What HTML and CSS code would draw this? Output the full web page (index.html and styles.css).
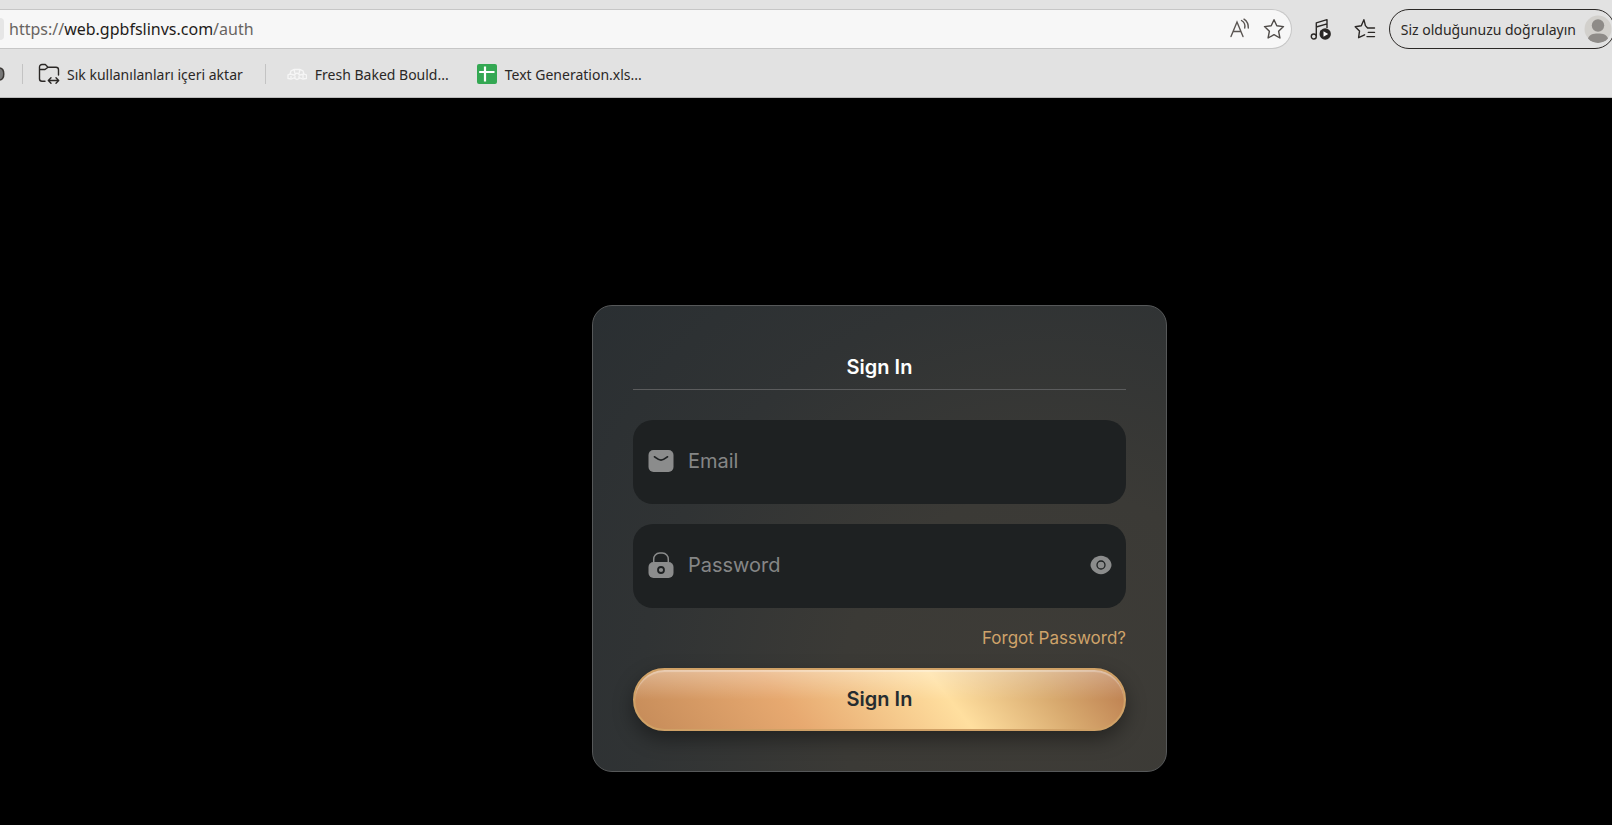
FILE: index.html
```html
<!DOCTYPE html>
<html lang="tr">
<head>
<meta charset="utf-8">
<meta name="viewport" content="width=device-width, initial-scale=1">
<title>Sign In</title>
<link rel="stylesheet" href="styles.css">
</head>
<body>
<header class="chrome">
  <div class="toolbar">
    <div class="address">
      <span class="site-info"></span>
      <span class="url">https://<b>web.gpbfslinvs.com</b>/auth</span>
      <button class="tool" aria-label="Read aloud">
        <svg width="22" height="22" viewBox="0 0 22 22" fill="none" stroke="#5a5552" stroke-width="1.4" stroke-linecap="round"><path d="M2 18.500 8 4l6 14.500M4.300 13.500h7.600M12.500 2.500a7 7 0 0 1 3.200 7.500M15 1.200a10 10 0 0 1 4.300 8.800"/></svg>
      </button>
      <button class="tool" aria-label="Add to favourites">
        <svg width="22" height="22" viewBox="0 0 22 22" fill="none" stroke="#4f4b48" stroke-width="1.4" stroke-linejoin="round"><path d="M11 1.700 13.800 7.800 20.500 8.600 15.600 13.200 16.900 20 11 16.700 5.100 20 6.400 13.200 1.500 8.600 8.200 7.800Z"/></svg>
      </button>
    </div>
    <button class="tool" aria-label="Media">
      <svg width="22" height="22" viewBox="0 0 22 22" fill="none" stroke="#2b2826" stroke-width="1.400" stroke-linejoin="round"><circle cx="3.800" cy="18.500" r="2.500"/><path d="M6.300 18.300V4.800L17 1.600V10M6.300 9 17 5.800M11 12.500v5"/><circle cx="15.200" cy="16" r="5.700" fill="#2b2826" stroke="none"/><path d="M13.500 13.200v5.600l4.700-2.800z" fill="#fff" stroke="none"/></svg>
    </button>
    <button class="tool" aria-label="Favourites">
      <svg width="22" height="22" viewBox="0 0 22 22" fill="none" stroke="#2b2826" stroke-width="1.400" stroke-linejoin="round" stroke-linecap="round"><path d="M20.500 10H13.600L11.400 7.600 9.900 1.700 7.300 7.700 1.200 8.700 5.500 13.100 4.600 19.700 10.600 16.800M14.300 14.400H20.500M13 18.600H20.500"/></svg>
    </button>
    <button class="profile"><span>Siz olduğunuzu doğrulayın</span>
      <svg width="28" height="28" viewBox="0 0 28 28"><circle cx="14" cy="14" r="13.500" fill="#d2d0cc"/><circle cx="14" cy="10.500" r="6.200" fill="#8e8b88"/><path d="M4 23.500C5 19.800 9 18.500 14 18.500s9 1.300 10 5A13.500 13.500 0 0 1 4 23.500Z" fill="#8e8b88"/></svg>
    </button>
  </div>
  <nav class="bookmarks" aria-label="Bookmarks">
    <svg class="edge-mark" width="5" height="16" viewBox="0 0 5 16"><path d="M0 2c5 1 5 11 0 12" fill="#777" stroke="#3a3734" stroke-width="1.500"/></svg>
    <span class="divider"></span>
    <a class="bookmark import" href="#import">
      <svg width="22" height="22" viewBox="0 0 22 22" fill="none" stroke="#2b2826" stroke-width="1.400" stroke-linecap="round" stroke-linejoin="round"><path d="M7 18.300H4A2.500 2.500 0 0 1 1.500 15.800V4A2.500 2.500 0 0 1 4 1.500H7.300L10 4.200H18A2.500 2.500 0 0 1 20.500 6.700V12M1.500 6.500H7L10 4.200M10.500 17.500H20.500M13 14.800 10.300 17.500 13 20.200M18 14.800 20.700 17.500 18 20.200"/></svg>
      <span>Sık kullanılanları içeri aktar</span>
    </a>
    <span class="divider"></span>
    <a class="bookmark boulder" href="#boulder">
      <svg width="20" height="20" viewBox="0 0 20 20" fill="none" stroke="#f6f6f6" stroke-width="1.300"><path d="M1 14.500V11L3 10 4 7 7 5.500H13L16 7 17 10 19.500 11V14.500L16 15 13 14 10 15.500 7 14 4 15ZM3 10l4 1 3-2 3 2 4-1M7 5.500l1 4M13 5.500l-1 4M4 12v2M8 11.500v3M12 11.500v3M16 11v3"/></svg>
      <span>Fresh Baked Bould...</span>
    </a>
    <a class="bookmark" href="#text-generation">
      <svg width="20" height="20" viewBox="0 0 20 20"><rect width="20" height="20" rx="2" fill="#34a853"/><path d="M8 2.500V17.500M2.200 8H17.500" stroke="#fff" stroke-width="2.200"/></svg>
      <span>Text Generation.xls...</span>
    </a>
  </nav>
</header>
<main class="stage">
  <form class="card">
    <h1 class="title">Sign In</h1>
    <div class="field">
      <label for="email" aria-label="Email"><svg width="26" height="26" viewBox="0 0 26 26"><rect x="0.500" y="2" width="25" height="22" rx="5" fill="#8b8c8c"/><path d="M6.500 8.800C8.500 10.200 10.500 12.200 13 12.200S17.500 10.200 19.500 8.800" fill="none" stroke="#1e2122" stroke-width="1.700" stroke-linecap="round"/></svg></label>
      <input id="email" type="email" placeholder="Email">
    </div>
    <div class="field">
      <label for="password" aria-label="Password"><svg width="26" height="26" viewBox="0 0 26 26"><path d="M5.700 11V7.500A6 6 0 0 1 11.700 1h2.600a6 6 0 0 1 6 6.500V11" fill="none" stroke="#8b8c8c" stroke-width="1.500"/><rect x="0.500" y="10" width="25" height="16" rx="5" fill="#8b8c8c"/><circle cx="13" cy="18" r="3" fill="none" stroke="#1e2122" stroke-width="1.800"/></svg></label>
      <input id="password" type="password" placeholder="Password">
      <button class="reveal" type="button" aria-label="Show password"><svg width="22" height="20" viewBox="0 0 22 20"><path d="M11 .8C17 .8 21.500 6 21.500 10S17 19.200 11 19.200.500 14 .500 10 5 .8 11 .8Z" fill="#8b8c8c"/><circle cx="11" cy="10" r="4" fill="none" stroke="#1e2122" stroke-width="1.300"/></svg></button>
    </div>
    <a class="forgot" href="#forgot">Forgot Password?</a>
    <button class="submit" type="submit">Sign In</button>
  </form>
</main>
</body>
</html>
```
FILE: styles.css
```css
* { box-sizing: border-box; }
body {
  margin: 0;
  min-height: 100vh;
  display: flex;
  flex-direction: column;
  background: #000;
  font-family: Inter, sans-serif;
  overflow-x: hidden;
}
button { border: 0; padding: 0; background: none; font: inherit; color: inherit; }
svg { display: block; flex: none; }

.chrome {
  padding-top: 9px;
  background: #e2e2e2;
  border-bottom: 1px solid #bcbcbc;
  color: #2b2826;
  font-family: "Noto Sans", sans-serif;
  overflow: hidden;
}
.toolbar { display: flex; align-items: center; gap: 22px; }
.address {
  flex: 1;
  min-width: 0;
  height: 40px;
  display: flex;
  align-items: center;
  gap: 12px;
  margin-right: -4px;
  padding-right: 6px;
  border: 1px solid #c6c6c6;
  border-left: 0;
  border-radius: 0 20px 20px 0;
  background: #f7f7f7;
}
.site-info {
  width: 4px;
  height: 22px;
  margin-right: -7px;
  border-radius: 0 10px 10px 0;
  background: #e6e6e6;
}
.url { flex: 1; font-size: 16px; color: #686461; white-space: nowrap; }
.url b { font-weight: 400; color: #1f1c1a; }
.profile {
  display: flex;
  align-items: center;
  gap: 8px;
  height: 40px;
  margin: 0 -3px 0 -9px;
  padding: 0 2px 0 11px;
  border: 1px solid #2b2826;
  border-radius: 20px;
  font-size: 14px;
  white-space: nowrap;
}
.bookmarks { display: flex; align-items: center; height: 48px; padding-top: 2px; font-size: 14px; }
.edge-mark { margin-right: 17px; }
.divider { width: 1px; height: 20px; background: #c3c3c3; }
.bookmark {
  display: flex;
  align-items: center;
  gap: 8px;
  margin-right: 28px;
  color: inherit;
  text-decoration: none;
  white-space: nowrap;
}
.import { margin: 0 22px 0 15px; gap: 7px; }
.boulder { margin-left: 21px; }

.stage {
  flex: 1;
  display: flex;
  justify-content: center;
  align-items: flex-start;
  padding: 207px 0 40px 147px;
}
.card {
  width: 100%;
  max-width: 575px;
  display: flex;
  flex-direction: column;
  padding: 47px 40px 40px;
  border: 1px solid #565859;
  border-radius: 20px;
  background: radial-gradient(circle at 80% 85%, #3e3c37 0, #3b3a36 35%, #303334 68%, #2a2f32 100%);
}
.title {
  margin: 0 0 30px;
  padding-bottom: 8px;
  border-bottom: 1px solid #5b5c5d;
  color: #fff;
  font-size: 20px;
  line-height: 28px;
  font-weight: 600;
  text-align: center;
}
.field {
  display: flex;
  align-items: center;
  gap: 14px;
  height: 84px;
  margin-bottom: 20px;
  padding: 0 14px 2px 15px;
  border-radius: 20px;
  background: #1e2122;
}
.field input {
  flex: 1;
  min-width: 0;
  height: 40px;
  padding: 0;
  border: 0;
  outline: 0;
  background: none;
  color: #fff;
  font: 400 20px Inter, sans-serif;
}
.field input::placeholder { color: #858686; opacity: 1; }
.forgot {
  align-self: flex-end;
  margin-bottom: 20px;
  color: #cfa36a;
  font-size: 17px;
  line-height: 20px;
  text-decoration: none;
}
.submit {
  height: 63px;
  padding-bottom: 2px;
  border: 2px solid #d0a166;
  border-radius: 32px;
  background:
    linear-gradient(180deg, rgba(255,255,255,.32), rgba(255,255,255,0) 50%),
    linear-gradient(52deg, #c48a58 0%, #e7a970 32%, #ffdf9f 63%, #d8aa6f 82%, #bd7f50 97%);
  background-origin: border-box;
  box-shadow: inset 0 2px 1px rgba(255,255,255,.3), 0 8px 20px rgba(0,0,0,.4);
  color: #252c30;
  font-size: 20px;
  font-weight: 600;
}
```
